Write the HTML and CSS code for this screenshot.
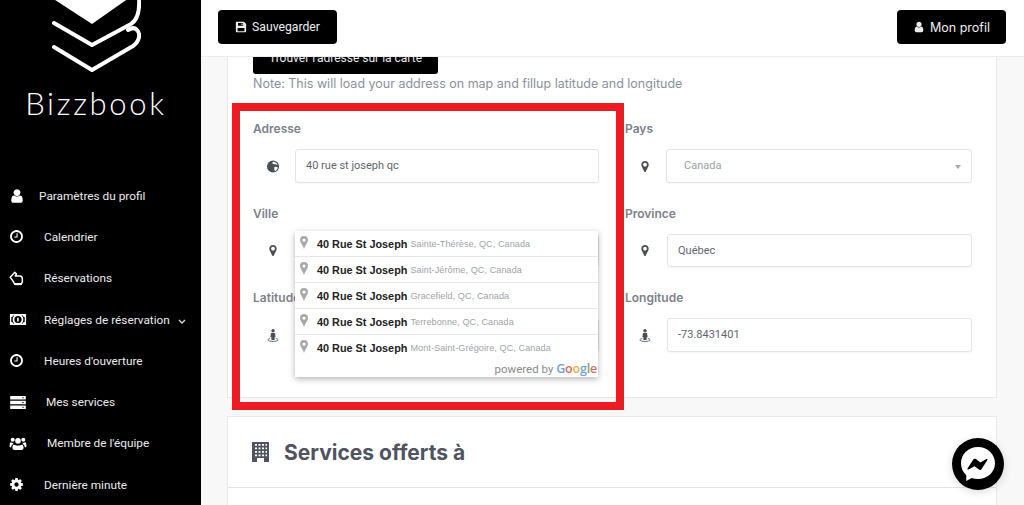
FILE: index.html
```html
<!DOCTYPE html>
<html lang="fr">
<head>
<meta charset="utf-8">
<title>Bizzbook</title>
<link rel="stylesheet" href="styles.css">
</head>
<body>
<svg class="defs" width="0" height="0" aria-hidden="true">
  <symbol id="i-user" viewBox="0 0 1792 1792"><path d="M1536 1399q0 109-62.5 187t-150.5 78h-854q-88 0-150.5-78t-62.5-187q0-85 8.5-160.5t31.5-151.5 58.5-130 94-88.5 134.5-34.5q131 128 313 128t313-128q76 0 134.5 34.5t94 88.5 58.5 130 31.5 151.5 8.5 160.5zm-256-887q0 159-112.5 271.5t-271.5 112.5-271.5-112.5-112.5-271.5 112.5-271.5 271.5-112.5 271.5 112.5 112.5 271.5z"/></symbol>
  <symbol id="i-clock" viewBox="0 0 1792 1792"><path d="M1024 544v448q0 14-9 23t-23 9h-320q-14 0-23-9t-9-23v-64q0-14 9-23t23-9h224v-352q0-14 9-23t23-9h64q14 0 23 9t9 23zm416 352q0-148-73-273t-198-198-273-73-273 73-198 198-73 273 73 273 198 198 273 73 273-73 198-198 73-273zm224 0q0 209-103 385.5t-279.5 279.5-385.5 103-385.5-103-279.5-279.5-103-385.5 103-385.5 279.5-279.5 385.5-103 385.5 103 279.5 279.5 103 385.5z"/></symbol>
  <symbol id="i-cog" viewBox="0 0 1792 1792"><path d="M1152 896q0-106-75-181t-181-75-181 75-75 181 75 181 181 75 181-75 75-181zm512-109v222q0 12-8 23t-20 13l-185 28q-19 54-39 91 35 50 107 138 10 12 10 25t-9 23q-27 37-99 108t-94 71q-12 0-26-9l-138-108q-44 23-91 38-16 136-29 186-7 28-36 28h-222q-14 0-24.5-8.5t-11.5-21.5l-28-184q-49-16-90-37l-141 107q-10 9-25 9-14 0-25-11-126-114-165-168-7-10-7-23 0-12 8-23 15-21 51-66.5t54-70.5q-27-50-41-99l-183-27q-13-2-21-12.5t-8-23.5v-222q0-12 8-23t19-13l186-28q14-46 39-92-40-57-107-138-10-12-10-24 0-10 9-23 26-36 98.5-107.5t94.5-71.5q13 0 26 10l138 107q44-23 91-38 16-136 29-186 7-28 36-28h222q14 0 24.5 8.5t11.5 21.5l28 184q49 16 90 37l142-107q9-9 24-9 13 0 25 10 129 119 165 170 7 8 7 22 0 12-8 23-15 21-51 66.5t-54 70.5q26 50 41 98l183 28q13 2 21 12.5t8 23.5z"/></symbol>
  <symbol id="i-pin" viewBox="0 0 1792 1792"><path d="M1152 640q0-106-75-181t-181-75-181 75-75 181 75 181 181 75 181-75 75-181zm256 0q0 109-33 179l-364 774q-16 33-47.5 52t-67.5 19-67.5-19-46.5-52l-365-774q-33-70-33-179 0-212 150-362t362-150 362 150 150 362z"/></symbol>
  <symbol id="i-hand" viewBox="0 0 18 18"><path d="M1.500 7.500 7 1.500l2 2L7.500 6H13c2 0 3 1.500 3 3.500V13l-1.500 3H7l-2-3.500z" fill="none" stroke="currentColor" stroke-width="1.800" stroke-linejoin="round"/><path d="M7 14.500h7.500V17H7z" fill="currentColor"/></symbol>
  <symbol id="i-money" viewBox="-1 0 20 12"><path fill-rule="evenodd" d="M0 0h18v12H0zM5 1.500H3.500a2 2 0 0 1-2 2v5a2 2 0 0 1 2 2H5A6 6 0 0 1 5 1.500zm8 0a6 6 0 0 1 0 9h1.500a2 2 0 0 1 2-2v-5a2 2 0 0 1-2-2zM9 2a4 4 0 1 0 0 8 4 4 0 0 0 0-8z"/><path d="M8 4h1.800v4.200H8z"/></symbol>
  <symbol id="i-server" viewBox="0 0 18 15"><path fill-rule="evenodd" d="M0 0h18v4H0zm14 1.300v1.400h1.500V1.300zM0 5.500h18v4H0zm14 1.300v1.400h1.500V6.800zM0 11h18v4H0zm14 1.300v1.400h1.500v-1.400z"/></symbol>
  <symbol id="i-users" viewBox="0 0 18 14"><circle cx="9" cy="4.200" r="3"/><circle cx="3.300" cy="3" r="2.200"/><circle cx="14.700" cy="3" r="2.200"/><path d="M4.500 8c1 .8 2.600 1.200 4.500 1.200S12.500 8.800 13.500 8c1 .6 1.500 2 1.500 3.700 0 1.500-1 2.300-2 2.300H5c-1 0-2-.8-2-2.300C3 10 3.500 8.600 4.500 8z"/><path d="M0 8.200C0 6.600.6 5.600 1.400 5.600c1 .7 1.700.9 3 .7-.6.7-1 1.200-1.200 1.900-.8.500-1.400 1.500-1.500 2.900H1c-.6 0-1-.5-1-1.200zM18 8.200c0-1.600-.6-2.600-1.400-2.600-1 .7-1.700.9-3 .7.600.7 1 1.200 1.200 1.900.8.500 1.400 1.500 1.500 2.900h.7c.6 0 1-.5 1-1.200z"/></symbol>
  <symbol id="i-save" viewBox="0 0 14 14"><path fill-rule="evenodd" d="M1 1h9.500L13 3.500V12a1 1 0 0 1-1 1H2a1 1 0 0 1-1-1zm2.500 1.200v3.300h6V2.200zm-.5 6V12h8V8.200z"/><path d="M7.500 2.800h1.300v2H7.500z"/></symbol>
  <symbol id="i-globe" viewBox="0 0 14 14"><circle cx="7" cy="7" r="6.500"/><path fill="#fff" d="M6.800 1.800c2.400 0 4.300 1 5 3-1 .8-2 .2-2.500-.5-.8.500-2 .3-2.700-.4-.5-.7-.3-1.500.2-2.100zM9 7.500c1.200-.3 2.500 0 3.200.7-.4 2-1.700 3.400-3.200 4-.6-1-.8-2.500-.6-3.500-.3-.4-.2-1 .6-1.200z"/></symbol>
  <symbol id="i-street" viewBox="0 0 14 16"><circle cx="7" cy="2.200" r="2.100"/><path d="M4.500 5h5l.7 5H9v3.500H5V10H3.800z"/><path fill="none" stroke="currentColor" d="M3.500 11.700C1.700 12.100.7 12.700.7 13.400c0 1 2.800 1.900 6.300 1.900s6.300-.9 6.300-1.900c0-.7-1-1.300-2.800-1.700"/></symbol>
  <symbol id="i-building" viewBox="0 0 17 20"><path fill-rule="evenodd" d="M0 0h17v20H0zM3 2v1.700h2V2zm3.500 0v1.700h2V2zM10 2v1.700h2V2zm3.500 0v1.700h1.500V2zM3 5.500v1.700h2V5.500zm3.500 0v1.700h2V5.500zm3.500 0v1.700h2V5.500zm3.500 0v1.700h1.500V5.500zM3 9v1.700h2V9zm3.500 0v1.700h2V9zM10 9v1.700h2V9zm3.500 0v1.700h1.500V9zM3 12.500v1.700h2v-1.700zm3.500 0v1.700h2v-1.700zm3.500 0v1.700h2v-1.700zm3.500 0v1.700h1.500v-1.700zM5 16v4h7v-4z"/></symbol>
  <symbol id="i-gpin" viewBox="0 0 10 16"><path fill-rule="evenodd" d="M5 0a5 5 0 0 1 5 5c0 3-3.500 6.500-5 11C3.500 11.500 0 8 0 5a5 5 0 0 1 5-5zm0 3a2 2 0 1 0 0 4 2 2 0 0 0 0-4z"/></symbol>
</svg>

<div class="app">
  <aside class="sidebar">
    <div class="brand">
      <svg class="logo" viewBox="0 0 90 72" aria-hidden="true">
        <path class="logo-fill" d="M1-2 41 24 78-2z"/>
        <path class="logo-line" d="M3 23 41 45 80 24C86 20 89 12 88-2"/>
        <path class="logo-line" d="M3 47 41 70 82 46C89 41 90 33 85 29 82 27 80 28 77 30"/>
      </svg>
      <div class="brand-name">Bizzbook</div>
    </div>
    <nav class="menu">
      <a class="item"><svg class="mi mi-user"><use href="#i-user"/></svg><span class="lb lb-39">Paramètres du profil</span></a>
      <a class="item"><svg class="mi"><use href="#i-clock"/></svg><span class="lb">Calendrier</span></a>
      <a class="item"><svg class="mi mi-hand"><use href="#i-hand"/></svg><span class="lb">Réservations</span></a>
      <a class="item"><svg class="mi mi-wide"><use href="#i-money"/></svg><span class="lb">Réglages de réservation</span><svg class="chev" viewBox="0 0 8 5"><path d="M1 1l3 3 3-3"/></svg></a>
      <a class="item"><svg class="mi"><use href="#i-clock"/></svg><span class="lb">Heures d'ouverture</span></a>
      <a class="item"><svg class="mi mi-wide"><use href="#i-server"/></svg><span class="lb lb-46">Mes services</span></a>
      <a class="item"><svg class="mi mi-wide"><use href="#i-users"/></svg><span class="lb lb-47">Membre de l'équipe</span></a>
      <a class="item"><svg class="mi"><use href="#i-cog"/></svg><span class="lb">Dernière minute</span></a>
    </nav>
  </aside>

  <main class="main">
    <header class="topbar">
      <button class="btn"><svg class="bi"><use href="#i-save"/></svg>Sauvegarder</button>
      <button class="btn btn-profile"><svg class="bi"><use href="#i-user"/></svg>Mon profil</button>
    </header>
    <div class="content">
      <section class="card card-address">
        <button class="btn-map">Trouver l'adresse sur la carte</button>
        <p class="note">Note: This will load your address on map and fillup latitude and longitude</p>
        <div class="form">
          <div class="field">
            <label class="label">Adresse</label>
            <div class="control"><svg class="fi"><use href="#i-globe"/></svg><div class="input">40 rue st joseph qc</div></div>
          </div>
          <div class="field">
            <label class="label">Pays</label>
            <div class="control"><svg class="fi"><use href="#i-pin"/></svg><div class="input select">Canada<span class="caret"></span></div></div>
          </div>
          <div class="field">
            <label class="label">Ville</label>
            <div class="control"><svg class="fi"><use href="#i-pin"/></svg><div class="input"></div></div>
            <div class="pac">
              <div class="pac-item"><svg class="gpin"><use href="#i-gpin"/></svg><b>40 Rue St Joseph</b><span>Sainte-Thérèse, QC, Canada</span></div>
              <div class="pac-item"><svg class="gpin"><use href="#i-gpin"/></svg><b>40 Rue St Joseph</b><span>Saint-Jérôme, QC, Canada</span></div>
              <div class="pac-item"><svg class="gpin"><use href="#i-gpin"/></svg><b>40 Rue St Joseph</b><span>Gracefield, QC, Canada</span></div>
              <div class="pac-item"><svg class="gpin"><use href="#i-gpin"/></svg><b>40 Rue St Joseph</b><span>Terrebonne, QC, Canada</span></div>
              <div class="pac-item pac-last"><svg class="gpin"><use href="#i-gpin"/></svg><b>40 Rue St Joseph</b><span>Mont-Saint-Grégoire, QC, Canada</span></div>
              <div class="pac-foot">powered by <span class="goog"><i class="g-b">G</i><i class="g-r">o</i><i class="g-y">o</i><i class="g-b">g</i><i class="g-g">l</i><i class="g-r">e</i></span></div>
            </div>
          </div>
          <div class="field">
            <label class="label">Province</label>
            <div class="control"><svg class="fi"><use href="#i-pin"/></svg><div class="input">Québec</div></div>
          </div>
          <div class="field">
            <label class="label">Latitude</label>
            <div class="control"><svg class="fi"><use href="#i-street"/></svg><div class="input"></div></div>
          </div>
          <div class="field">
            <label class="label">Longitude</label>
            <div class="control"><svg class="fi"><use href="#i-street"/></svg><div class="input">-73.8431401</div></div>
          </div>
        </div>
      </section>
      <section class="card card-services">
        <h2 class="card-title"><svg class="ti"><use href="#i-building"/></svg>Services offerts à</h2>
      </section>
    </div>
  </main>
</div>

<div class="highlight"></div>
<button class="chat" aria-label="Messenger">
  <svg viewBox="0 0 52 52" class="chat-svg">
    <circle cx="26" cy="26" r="26" fill="#000"/>
    <path fill="#fff" d="M26 9c-9.600 0-17 7-17 16.300 0 4.900 2 9.100 5.300 12v5.700l5.300-3c2 .7 4.200 1.100 6.400 1.100 9.600 0 17-7 17-15.800S35.600 9 26 9z"/>
    <path fill="#000" d="M15.500 30.500l5.800-9c.6-.9 1.800-1.100 2.600-.5l4.500 3.400 6-3.300c.7-.4 1.400.4 1 1l-5.800 9c-.6.9-1.800 1.100-2.600.5l-4.500-3.400-6 3.300c-.7.4-1.400-.4-1-1z"/>
  </svg>
</button>
</body>
</html>
```
FILE: styles.css
```css
* { box-sizing: border-box; }
html, body { margin: 0; height: 100%; overflow: hidden; }
body { font-family: Roboto, "Liberation Sans", sans-serif; background: #f8f8f8; }
.defs { position: absolute; }

.app { display: flex; height: 505px; }

/* Sidebar */
.sidebar { width: 201px; flex: none; background: #000; color: #fff; overflow: hidden; }
.brand { height: 175px; display: flex; flex-direction: column; align-items: center; }
.logo { width: 90px; height: 72px; margin-right: 9px; flex: none; }
.logo-fill { fill: #fff; }
.logo-line { fill: none; stroke: #fff; stroke-width: 4; stroke-linecap: round; stroke-linejoin: round; }
.brand-name { font-family: Lato, sans-serif; font-weight: 300; font-size: 31px; letter-spacing: 2.7px; line-height: 36px; margin-top: 13px; margin-right: 9px; color: #fff; }
.menu { display: flex; flex-direction: column; }
.item { display: flex; align-items: center; height: 41.3px; padding-left: 9px; font-size: 11.8px; font-weight: 400; color: #ececec; flex: none; }
.mi { width: 15px; height: 15px; fill: #fff; color: #fff; flex: none; }
.mi-user { width: 16px; height: 16px; }
.mi-hand { height: 17px; }
.mi-wide { width: 18px; height: 13px; }
.lb { margin-left: 20px; }
.mi-wide + .lb { margin-left: 17px; }
.lb-39 { margin-left: 14px; }
.mi-wide + .lb-46 { margin-left: 19px; }
.mi-wide + .lb-47 { margin-left: 20px; }
.chev { width: 8px; height: 5px; margin-left: 8px; margin-top: 3px; fill: none; stroke: #ddd; stroke-width: 1.3; }

/* Main */
.main { flex: 1; min-width: 0; display: flex; flex-direction: column; }
.topbar { flex: none; height: 57px; background: #fff; border-bottom: 1px solid #ececec; display: flex; align-items: flex-start; justify-content: space-between; padding: 10px 18px 0 17px; }
.btn { height: 34px; border: 0; border-radius: 4px; background: #000; color: #eee; display: flex; align-items: center; justify-content: center; font-family: Roboto, sans-serif; font-size: 12.2px; width: 119px; padding: 0; }
.bi { width: 12px; height: 12px; fill: #eee; margin-right: 5px; flex: none; }
.btn-profile { width: 109px; font-family: Inter, sans-serif; font-size: 12.5px; }
.content { flex: 1; min-height: 0; overflow: hidden; padding: 0 27px 0 26px; }

.card { background: #fff; border: 1px solid #e9e9ec; }
.card-address { margin-top: -37px; height: 378px; padding: 20px 25px 0; }
.btn-map { display: block; width: 185px; height: 33px; border: 0; border-radius: 3px; background: #000; color: #eee; font-family: Roboto, sans-serif; font-size: 12px; padding: 0; }
.note { margin: 0; height: 20px; line-height: 20px; font-family: Inter, sans-serif; font-size: 12.5px; color: #8a919c; white-space: nowrap; }

.form { display: grid; grid-template-columns: 347px 347px; column-gap: 25px; row-gap: 21px; margin-top: 25.4px; }
.field { position: relative; }
.label { display: block; height: 20px; line-height: 20px; margin-bottom: 10px; font-family: Inter, sans-serif; font-weight: 600; font-size: 12px; color: #7d818c; }
.control { display: flex; align-items: center; height: 33.5px; }
.fi { width: 42px; height: 13px; flex: none; padding-right: 2px; fill: #4a4f5a; color: #4a4f5a; }
.input { flex: 1; height: 33.5px; background: #fff; border: 1px solid #e4e5e8; border-radius: 3px; box-shadow: 0 1px 2px rgba(0,0,0,.04); padding-left: 10px; font-size: 11px; line-height: 31.5px; color: #5f6570; position: relative; }
.field:nth-child(odd) .input { margin-right: 1px; }
.select { margin-left: -1px; padding-left: 17px; color: #9aa0a8; }
.caret { position: absolute; right: 10px; top: 15px; border: 3px solid transparent; border-top: 4px solid #a4a8ae; border-bottom: 0; }

/* Autocomplete */
.pac { position: absolute; left: 42px; top: 27.6px; width: 303px; height: 146px; background: #fff; box-shadow: 0 2px 6px rgba(0,0,0,.3); z-index: 2; font-family: "Liberation Sans", Arial, sans-serif; }
.pac-item { height: 26px; display: flex; align-items: center; padding-left: 5px; border-bottom: 1px solid #e6e6e6; white-space: nowrap; font-size: 11px; }
.pac-last { border-bottom: 0; }
.gpin { width: 8px; height: 13px; fill: #a8a8a8; margin-right: 9px; margin-top: -3px; flex: none; }
.pac-item b { font-size: 10.85px; color: #222; margin-right: 3px; }
.pac-item span { font-size: 9.1px; color: #a0a3a8; letter-spacing: .08px; }
.pac-foot { height: 16px; text-align: right; padding-right: 1px; font-family: Roboto, sans-serif; font-size: 11.5px; line-height: 15px; color: #8a8a8a; }
.goog { font-family: "Open Sans", sans-serif; font-weight: 600; font-size: 12.5px; letter-spacing: -.2px; }
.goog i { font-style: normal; }
.g-b { color: #6f9fe0; }
.g-r { color: #e0675c; }
.g-y { color: #e4b53a; }
.g-g { color: #5fb06e; }

/* Services card */
.card-services { margin-top: 18px; height: 200px; }
.card-title { margin: 0; height: 71px; border-bottom: 1px solid #e4e4e4; display: flex; align-items: center; padding-left: 24px; font-family: Inter, sans-serif; font-weight: 700; font-size: 21px; color: #50545f; }
.ti { width: 17px; height: 20px; fill: #50545f; margin-right: 15px; flex: none; }

/* Overlays */
.highlight { position: absolute; left: 232px; top: 103px; width: 392px; height: 307px; border: 8px solid #ed1c24; pointer-events: none; z-index: 3; }
.chat { position: absolute; left: 952px; top: 438px; width: 52px; height: 52px; padding: 0; border: 0; border-radius: 50%; background: none; box-shadow: 0 2px 8px rgba(0,0,0,.15); z-index: 4; }
.chat-svg { display: block; width: 52px; height: 52px; }
```
